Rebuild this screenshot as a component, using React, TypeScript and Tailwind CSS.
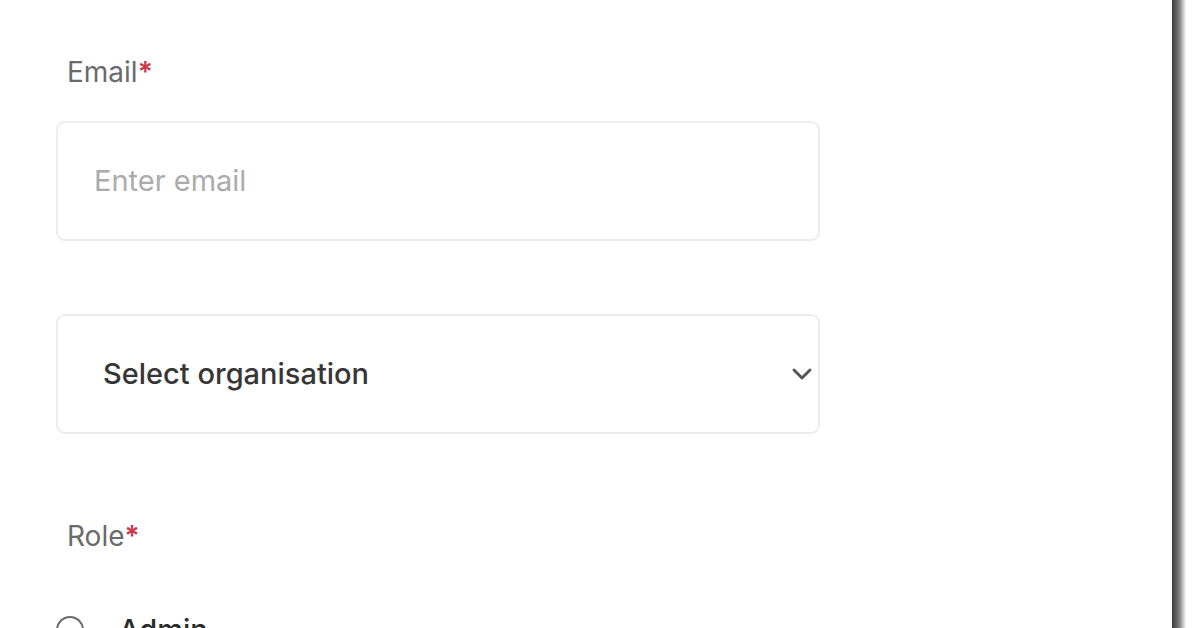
import { ChevronDown } from "lucide-react";

export default function App() {
  return (
    <main className="flex h-[628px] w-[1196px] overflow-hidden bg-white font-['Inter',sans-serif]">
      {/* Form */}
      <section className="flex-1 pl-[56px] pt-[54px]">
        <label className="ml-[11px] block text-[28px] leading-[36px] text-[#6b6b6b]">
          Email<span className="font-semibold text-[#c8374a]">*</span>
        </label>
        <div className="mt-[31px] flex h-[120px] w-[764px] items-center rounded-[9px] border-2 border-[#ececec] px-[36px]">
          <span className="text-[29px] text-[#ababab]">Enter email</span>
        </div>

        <div className="mt-[73px] flex h-[120px] w-[764px] items-center justify-between rounded-[9px] border-2 border-[#ececec] pl-[45px] pr-0">
          <span className="text-[29px] font-medium text-[#363636]">Select organisation</span>
          <ChevronDown size={32} strokeWidth={2.2} className="text-[#555]" />
        </div>

        <label className="ml-[11px] mt-[84px] block text-[28px] leading-[36px] text-[#6b6b6b]">
          Role<span className="font-semibold text-[#c8374a]">*</span>
        </label>
        <div className="mt-[54px] flex items-center gap-[35px]">
          <span className="h-[28px] w-[28px] rounded-full border-2 border-[#6a6a6a]" />
          <span className="text-[29px] font-medium text-[#2a2a2a]">Admin</span>
        </div>
      </section>

      {/* Window edge */}
      <div className="w-[14px] bg-linear-to-r from-[#3a3a3a] via-[#7a7a7a] to-white" />
      <div className="w-[10px]" />
    </main>
  );
}
